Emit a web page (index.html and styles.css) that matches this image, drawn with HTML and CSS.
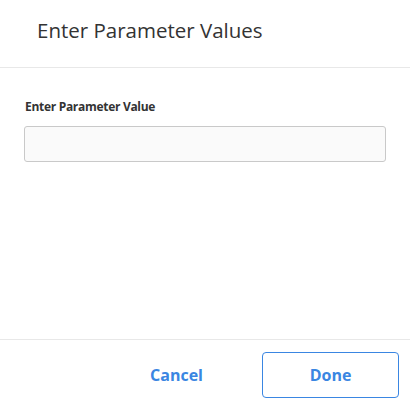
FILE: index.html
```html
<!DOCTYPE html>
<html>
<head>
<meta charset="utf-8">
<link rel="stylesheet" href="styles.css">
</head>
<body>
<div class="dialog">
  <div class="dialog-header">
    <h1 class="dialog-title">Enter Parameter Values</h1>
  </div>
  <div class="dialog-body">
    <label class="field-label" for="param">Enter Parameter Value</label>
    <input class="field-input" id="param" type="text">
  </div>
  <div class="dialog-footer">
    <button class="btn btn-text">Cancel</button>
    <button class="btn btn-outline">Done</button>
  </div>
</div>
</body>
</html>
```
FILE: styles.css
```css
html, body {
  margin: 0;
  padding: 0;
  background: #ffffff;
}
body {
  font-family: "Open Sans", "Noto Sans", sans-serif;
  color: #333333;
}
.dialog {
  width: 410px;
  height: 413px;
  display: flex;
  flex-direction: column;
  box-sizing: border-box;
}
.dialog-header {
  height: 68px;
  box-sizing: border-box;
  border-bottom: 1px solid #e8e8e8;
  padding: 14px 0 0 37px;
}
.dialog-title {
  margin: 0;
  font-size: 20.5px;
  font-weight: 400;
  line-height: 32px;
  color: #333333;
  letter-spacing: 0;
}
.dialog-body {
  flex: 1;
  padding: 31px 24px 0 24px;
  display: flex;
  flex-direction: column;
}
.field-label {
  font-size: 12px;
  font-weight: 700;
  line-height: 16px;
  color: #333333;
  margin: 0 0 11px 1px;
  letter-spacing: -0.3px;
}
.field-input {
  height: 36px;
  box-sizing: border-box;
  border: 1px solid #c9c9c9;
  border-radius: 3px;
  background: #fafafa;
  margin: 0;
  padding: 0 8px;
  width: 362px;
}
.dialog-footer {
  height: 74px;
  box-sizing: border-box;
  border-top: 1px solid #e8e8e8;
  display: flex;
  justify-content: flex-end;
  align-items: flex-start;
  gap: 17px;
  padding: 12px 11px 0 0;
}
.btn {
  width: 137px;
  height: 46px;
  box-sizing: border-box;
  font-family: "Open Sans", "Noto Sans", sans-serif;
  font-size: 16px;
  font-weight: 700;
  color: #3a86e2;
  background: #ffffff;
  border-radius: 4px;
  cursor: pointer;
  padding: 0;
}
.btn-text {
  border: none;
  background: transparent;
}
.btn-outline {
  border: 1.5px solid #3a86e2;
}
```
